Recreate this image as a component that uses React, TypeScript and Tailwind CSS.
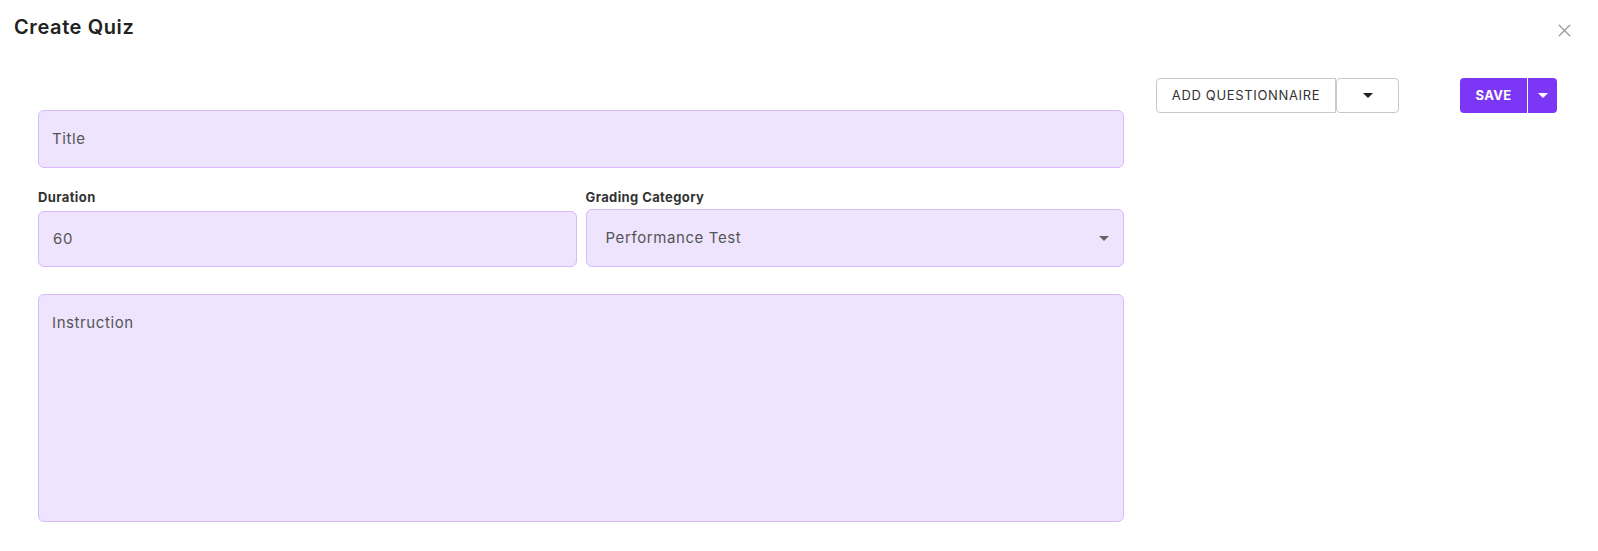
import { X } from 'lucide-react'

function Caret({ className = '' }: { className?: string }) {
  return (
    <svg viewBox="0 0 10 5" className={className} aria-hidden>
      <path d="M0 0h10L5 5z" fill="currentColor" />
    </svg>
  )
}

export default function App() {
  return (
    <div
      className="min-h-[551px] w-full bg-white text-[#222]"
      style={{ fontFamily: 'Inter, "Open Sans", sans-serif' }}
    >
      <div className="flex h-[66px] items-start justify-between pl-[14px] pr-[23px] pt-[13px]">
        <h1 className="text-[20px] font-semibold leading-[28px] tracking-[0.03em] text-[#222]">Create Quiz</h1>
        <button className="mt-[7px] text-[#9a9a9a]" aria-label="Close">
          <X className="size-[21px]" strokeWidth={1.5} />
        </button>
      </div>

      <div className="flex items-start pl-[38px] pt-3">
        <div className="mt-8 w-[1086px]">
          <div className="flex h-[58px] items-center rounded-md border border-[#d9b8fb] bg-[#efe4fd] px-[13px] text-[15px] tracking-[0.04em] text-[#555]">
            Title
          </div>

          <div className="mt-[21px] grid grid-cols-2 gap-x-[9px]">
            <div>
              <label className="block text-[13px] font-bold leading-4 tracking-[0.03em] text-[#333]">Duration</label>
              <div className="mt-[6px] flex h-[56px] items-center rounded-md border border-[#d9b8fb] bg-[#efe4fd] px-[14px] text-[15px] tracking-[0.04em] text-[#555]">
                60
              </div>
            </div>
            <div>
              <label className="block text-[13px] font-bold leading-4 tracking-[0.03em] text-[#333]">Grading Category</label>
              <div className="mt-1 flex h-[58px] items-center justify-between rounded-md border border-[#d9b8fb] bg-[#efe4fd] pl-[19px] pr-[14px] text-[15px] tracking-[0.04em] text-[#555]">
                <span>Performance Test</span>
                <Caret className="h-[5px] w-[10px] text-[#666]" />
              </div>
            </div>
          </div>

          <div className="mt-[27px] h-[228px] rounded-md border border-[#d9b8fb] bg-[#efe4fd] px-[13px] pt-[17px] text-[15px] tracking-[0.04em] text-[#555]">
            Instruction
          </div>
        </div>

        <div className="ml-8 flex items-center">
          <div className="flex h-[35px]">
            <button className="w-[180px] rounded-l border border-[#c8c8c8] text-[13px] tracking-[0.05em] text-[#333]">
              ADD QUESTIONNAIRE
            </button>
            <button className="flex w-[63px] items-center justify-center rounded border border-[#c8c8c8] text-[#222]">
              <Caret className="h-[5px] w-[10px]" />
            </button>
          </div>
          <div className="ml-[61px] flex h-[35px] overflow-hidden rounded text-white">
            <button className="w-[67px] bg-[#7b36f6] text-[13px] font-bold tracking-[0.03em]">SAVE</button>
            <button className="flex w-[30px] items-center justify-center border-l border-white bg-[#7b36f6]">
              <Caret className="h-[5px] w-[10px]" />
            </button>
          </div>
        </div>
      </div>
    </div>
  )
}
